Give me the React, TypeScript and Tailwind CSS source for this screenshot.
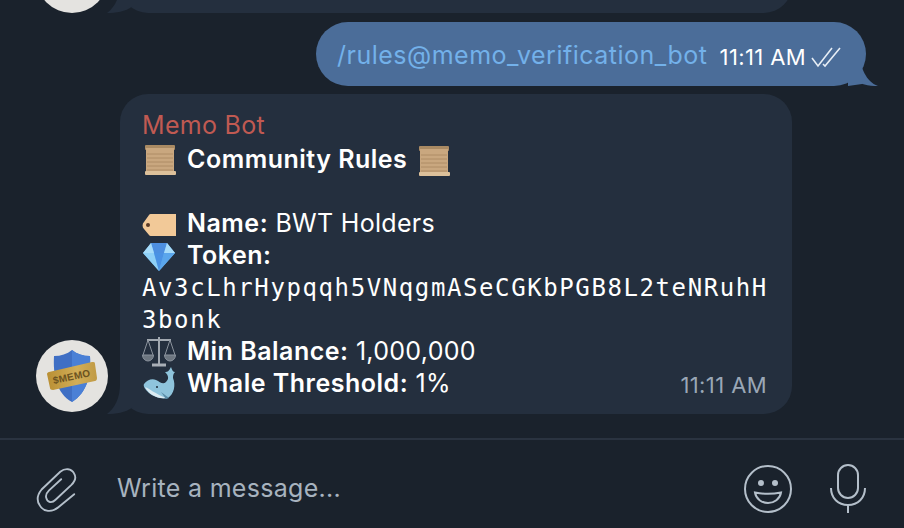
import type { ReactNode } from "react"

const Scroll = () => (
  <svg width="34" height="34" viewBox="0 0 34 34" className="shrink-0">
    <rect x="3" y="2" width="30" height="5" rx="1" fill="#a98a63" />
    <rect x="4" y="5" width="28" height="25" fill="#c9a77f" />
    <path d="M5 11h26M5 15h26M5 19h26M5 23h26M5 27h26" stroke="#ae8c66" strokeWidth="1" />
    <rect x="3" y="28" width="31" height="4" rx="1" fill="#dcc09a" />
  </svg>
)

const Tag = () => (
  <svg width="34" height="34" viewBox="0 0 34 34" className="shrink-0">
    <path d="M9 7h25v22H9a2 2 0 0 1-2-1l-5-6a5 5 0 0 1 0-7l5-7a2 2 0 0 1 2-1z" fill="#f2c998" />
    <circle cx="6" cy="18" r="2" fill="#5a3a25" />
  </svg>
)

const Gem = () => (
  <svg width="34" height="34" viewBox="0 0 34 34" className="shrink-0">
    <path d="M9 4h16l8 10-16 18L1 14z" fill="#6fb9f2" />
    <path d="M9 4h16l-3 10H12z" fill="#4d8fe0" />
    <path d="M1 14h11l5 18z" fill="#8fd0f7" />
    <path d="M33 14H22l-5 18z" fill="#5aa6ec" />
    <path d="M12 14h10l-5 18z" fill="#4a92e4" />
    <path d="M9 4l3 10H1zM25 4l-3 10h11z" fill="#a7dcfa" />
  </svg>
)

const Scales = () => (
  <svg width="34" height="34" viewBox="0 0 34 34" fill="none" stroke="#8a929c" className="shrink-0">
    <path d="M17 2v27M5 5h24" strokeWidth="2" stroke="#a1a8b0" />
    <path d="M10 30h14" strokeWidth="3" stroke="#a9afb6" />
    <path d="M6 5 1 20M6 5l5 15M28 5l-5 15M28 5l5 15" strokeWidth="1" />
    <path d="M0.5 20h11a5.5 6 0 0 1-11 0zM22.5 20h11a5.5 6 0 0 1-11 0z" fill="#6d7680" strokeWidth="1" />
  </svg>
)

const Whale = () => (
  <svg width="34" height="34" viewBox="0 0 34 34" className="shrink-0">
    <path d="M2 17C5 13 10 11 14 13c4 2 7 5 10 2 3-3 3-6-1-10 3 0 4-1 6-5 1 3 2 5 4 5-2 2-2 4-2 6 3 7 1 16-5 20-6 2-17-2-21-7-2-2-4-5-3-7z" fill="#8fc4dc" />
    <path d="M3 20c5 2 9 6 21 11-8 1-17-3-21-11z" fill="#dcebf2" />
    <path d="M19 25l8 6-3 1z" fill="#5a8ba6" />
    <circle cx="15" cy="20" r="1" fill="#1c2b3a" />
  </svg>
)

const Avatar = () => (
  <div className="flex size-[72px] shrink-0 items-center justify-center overflow-hidden rounded-full bg-[#e4e3e0]">
    <svg width="72" height="72" viewBox="0 0 72 72">
      <defs>
        <linearGradient id="plate" x1="0" y1="0" x2="1" y2="0">
          <stop offset="0" stopColor="#b98f34" />
          <stop offset="0.6" stopColor="#d2ae58" />
          <stop offset="1" stopColor="#c09a45" />
        </linearGradient>
      </defs>
      <path d="M36 10c5 4 11 6 18 6 1 18-2 36-18 46C20 53 17 34 18 16c7 0 13-2 18-6z" fill="#3f6fc4" />
      <path d="M36 10c5 4 11 6 18 6 1 18-2 36-18 46z" fill="#4a80d6" />
      <path d="M13 32 56 22c2 0 3 0 3 2l2 14c0 2-1 3-2 3L17 50c-2 0-3-1-3-2l-3-14c0-1 1-2 2-2z" fill="url(#plate)" />
      <text x="35.5" y="40" textAnchor="middle" transform="rotate(-12 36 36)" className="fill-[#6b5220] font-['Liberation_Sans',sans-serif] text-[10px] font-bold">$MEMO</text>
    </svg>
  </div>
)

const Line = ({ icon, children }: { icon: ReactNode; children: ReactNode }) => (
  <div className="flex h-8 items-center gap-[11px]">
    {icon}
    <span>{children}</span>
  </div>
)

const IncomingTail = () => (
  <svg width="28" height="30" viewBox="0 0 28 30" className="absolute bottom-0 left-[-13px] fill-[#242f3e]">
    <path d="M13 0C13 14 8 24 0 30 9 30 18 29 26 23L26 0z" />
  </svg>
)

const Bold = ({ children }: { children: ReactNode }) => <b className="font-semibold tracking-[0.5px]">{children}</b>

export default function App() {
  return (
    <div className="flex h-screen w-full flex-col overflow-hidden bg-[#1a222c] font-['Inter',sans-serif] text-[25px] tracking-[0.3px] text-white">
      <div className="flex min-h-0 flex-1 flex-col justify-end">
        {/* old message, mostly scrolled off */}
        <div className="flex items-end pl-9">
          <div className="mr-3 size-[72px] shrink-0 rounded-full bg-[#e4e3e0]" />
          <div className="relative h-[100px] w-[672px] rounded-[28px] bg-[#242f3e]">
            <IncomingTail />
          </div>
        </div>

        <div className="mt-[9px] flex justify-end pr-[38px]">
          <div className="relative flex h-16 w-[550px] items-center rounded-[32px] bg-[#4b6d99] pt-[3px] pl-[21px]">
            <span className="tracking-[0.5px] text-[#73b1ea]">/rules@memo_verification_bot</span>
            <span className="mt-[3px] ml-3 text-[22px] tracking-[0.4px]">11:11 AM</span>
            <svg width="32" height="22" viewBox="0 0 32 22" fill="none" stroke="#e6edf5" strokeWidth="1.6" className="mt-[3px] ml-1">
              <path d="M2 12l6 8L22 2M13 18l2 2L30 2" />
            </svg>
            <svg width="30" height="30" viewBox="0 0 30 30" className="absolute right-[-12px] bottom-0 fill-[#4b6d99]">
              <path d="M12 0C12 10 18 26 30 30 20 30 12 28 6 24L0 30z" />
              <path d="M0 0h14v28L0 30z" />
            </svg>
          </div>
        </div>

        <div className="mt-2 mb-6 flex items-end pl-9">
          <div className="mr-3 mb-0.5"><Avatar /></div>
          <div className="relative flex h-80 w-[672px] flex-col rounded-[28px] bg-[#242f3e] px-[22px] pt-[15px]">
            <IncomingTail />
            <div className="h-[35px] leading-8 text-[#c05a52]">Memo Bot</div>
            <Line icon={<Scroll />}>
              <Bold>Community Rules</Bold>
              <span className="ml-[9px] inline-block align-middle"><Scroll /></span>
            </Line>
            <div className="h-8" />
            <Line icon={<Tag />}><Bold>Name:</Bold> BWT Holders</Line>
            <Line icon={<Gem />}><Bold>Token:</Bold></Line>
            <div className="font-['DejaVu_Sans_Mono',monospace] text-[24px] leading-8 tracking-[1.6px] break-all">Av3cLhrHypqqh5VNqgmASeCGKbPGB8L2teNRuhH3bonk</div>
            <Line icon={<Scales />}><Bold>Min Balance:</Bold> 1,000,000</Line>
            <Line icon={<Whale />}><Bold>Whale Threshold:</Bold> 1%</Line>
            <span className="absolute right-[25px] bottom-3 text-[22px] tracking-[0.4px] text-[#9aa7b6]">11:11 AM</span>
          </div>
        </div>
      </div>

      <div className="flex h-[90px] shrink-0 items-center border-t-2 border-[#2a3340] pt-[10px] pr-[38px] pl-9 text-[#a7b3bf]">
        <svg width="41" height="47" viewBox="0 0 44 50" fill="none" stroke="#b4bfca" strokeWidth="2" strokeLinecap="round">
          <path d="M41 30 24 44c-7 6-16 5-20-2-4-6-2-12 2-17L26 6c5-4 12-4 15 2 3 5 0 9-3 12L21 36c-4 4-9 3-10-2-1-3 1-6 3-8l13-12" />
        </svg>
        <span className="ml-10 flex-1">Write a message...</span>
        <svg width="48" height="48" viewBox="0 0 48 48" fill="none" stroke="#b4bfca" strokeWidth="2" className="mr-[38px]">
          <circle cx="24" cy="24" r="23" />
          <circle cx="17" cy="18" r="3" fill="#b4bfca" stroke="none" />
          <circle cx="31" cy="18" r="3" fill="#b4bfca" stroke="none" />
          <path d="M11 27.5Q24 30 37 27.5C36 34 30 38 24 38S12 34 11 27.5z" />
        </svg>
        <svg width="36" height="50" viewBox="0 0 36 50" fill="none" stroke="#b4bfca" strokeWidth="2">
          <rect x="8" y="1" width="20" height="33" rx="10" />
          <path d="M1 24c0 10 7 17 17 17s17-7 17-17M18 41v8" />
        </svg>
      </div>
    </div>
  )
}
